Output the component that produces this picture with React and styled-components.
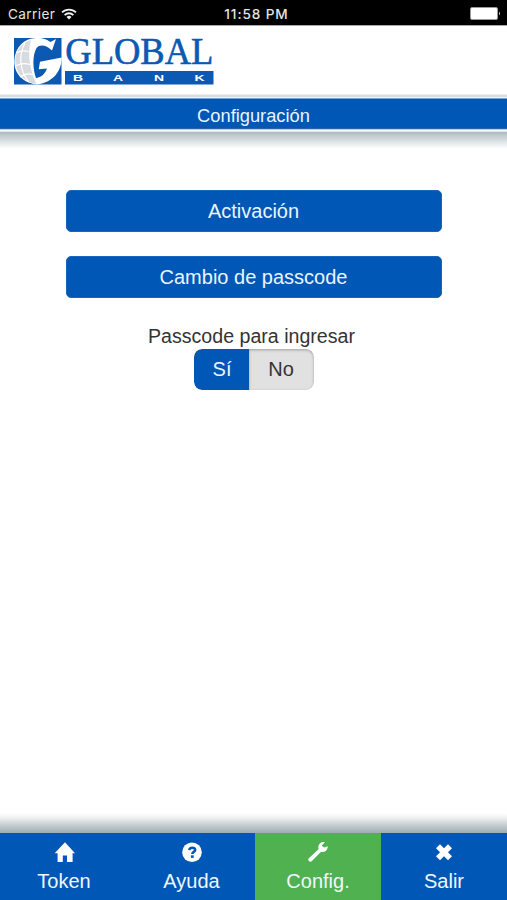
import React from "react";
import styled, { createGlobalStyle, css } from "styled-components";

const BLUE = "#0057b5";
const LOGO_BLUE = "#0b59b3";

const GlobalStyle = createGlobalStyle`
  * { box-sizing: border-box; }
  body { margin: 0; background: #fff; }
  button { font: inherit; border: 0; margin: 0; padding: 0; }
`;

const Screen = styled.div`
  width: 100%;
  height: 100vh;
  display: flex;
  flex-direction: column;
  overflow: hidden;
  background: #fff;
  color: #333;
  font-family: "Liberation Sans", Arial, sans-serif;
`;

const StatusBar = styled.div`
  height: 25px;
  flex: none;
  display: grid;
  grid-template-columns: 1fr auto 1fr;
  align-items: center;
  padding: 2px 6px 0 8px;
  background: #000;
  color: #e4e4e4;
  font: 13.6px/20px Inter, sans-serif;
`;

const Carrier = styled.div`
  display: flex;
  align-items: center;
  gap: 6px;
  letter-spacing: 0.4px;
`;

const Clock = styled.div`
  font-weight: 500;
  font-size: 13.6px;
  letter-spacing: 0.9px;
  transform: translateX(2px);
`;

const BatterySlot = styled.div`
  display: flex;
  justify-content: flex-end;
`;

const Brand = styled.header`
  height: 69px;
  flex: none;
  padding: 12px 0 0 13px;
  border-top: 1px solid #aaa;
`;

const TitleBar = styled.h1`
  height: 40px;
  flex: none;
  margin: 0;
  display: flex;
  align-items: center;
  justify-content: center;
  background: linear-gradient(
    #eee 0 1px,
    #dddddf 1px 3px,
    #eef3f7 3px 4px,
    #6aa5dc 4px 5px,
    ${BLUE} 5px 34px,
    #2a62a6 34px 35px,
    #b4d3ef 35px 36px,
    #f6fafc 36px 37px,
    #dfe5e8 37px 38px,
    #b5bdc2 38px 40px
  );
  color: #e8f4ff;
  font-weight: 400;
  font-size: 18.3px;
  line-height: 24px;
  padding-top: 3px;
`;

const Content = styled.main`
  flex: 1;
  display: flex;
  flex-direction: column;
  align-items: center;
  padding-top: 56px;
  background:
    linear-gradient(#bbc5ca, #d0d7da 5px, #eef1f2 11px, #fff 15px) top / 100% 15px no-repeat,
    linear-gradient(#fff, #eef0f1 5px, #c5ced1 12px, #9dadb4 20px) bottom / 100% 20px no-repeat;
`;

const ActionButton = styled.button`
  width: 376px;
  height: 42px;
  margin-bottom: 24px;
  border: 1px solid #1766bb;
  border-radius: 5px;
  background: ${BLUE};
  color: #eaf5ff;
  font-size: 20px;
  line-height: 24px;
`;

const SettingLabel = styled.div`
  margin: 2px 0 1px -4px;
  font-size: 19.6px;
  line-height: 24px;
`;

const Toggle = styled.div`
  display: flex;
  width: 120px;
  height: 41px;
  border-radius: 8px;
  overflow: hidden;
`;

const ToggleOption = styled.button`
  width: ${(p) => (p.$active ? 55 : 65)}px;
  background: #e1e1e1;
  color: #333;
  font-size: 20px;
  box-shadow: inset 0 1px 3px rgba(0, 0, 0, 0.3);
  border-radius: 0 8px 8px 0;
  ${(p) =>
    p.$active &&
    css`
      padding-left: 2px;
      background: ${BLUE};
      color: #eaf5ff;
      box-shadow: none;
      border-radius: 8px 0 0 8px;
    `}
`;

const TabBar = styled.nav`
  height: 67px;
  flex: none;
  display: grid;
  grid-template-columns: 128px 127px 126px 126px;
`;

const Tab = styled.button`
  display: flex;
  flex-direction: column;
  align-items: center;
  padding-top: 8px;
  gap: 6px;
  background: ${(p) => (p.$active ? "#50b150" : BLUE)};
  color: #fff;
  font-size: 20px;
  line-height: 24px;
  svg { display: block; }
`;

const TabLabel = styled.span`
  color: #eef7ff;
`;

const Wifi = () => (
  <svg width="16" height="12" viewBox="0 0 16 12" fill="none" stroke="#eee" strokeWidth="1.8">
    <path d="M1 4.4a10 10 0 0 1 14 0M3.6 7.1a6.2 6.2 0 0 1 8.8 0" />
    <path d="M5.5 9a3.6 3.6 0 0 1 5 0L8 11.6z" fill="#eee" stroke="none" />
  </svg>
);

const Battery = () => (
  <svg width="31" height="13" viewBox="0 0 31 13">
    <rect x=".5" y=".5" width="27" height="12" rx="1.5" fill="#fff" stroke="#999" />
    <path d="M29 4.5q2 2 0 4z" fill="#ccc" />
  </svg>
);

const Wordmark = styled.text`
  fill: ${LOGO_BLUE};
  stroke: ${LOGO_BLUE};
  stroke-width: 0.6px;
  font-family: "Liberation Serif", serif;
  font-size: 37.5px;
`;

const Submark = styled.text`
  fill: #fff;
  font-family: "Liberation Sans", sans-serif;
  font-weight: 700;
  font-size: 9px;
  text-anchor: middle;
`;

const LogoFrame = styled.svg`
  display: block;
  overflow: visible;
`;

const Logo = () => (
  <LogoFrame width="202" height="50" viewBox="13 38 202 50" role="img" aria-label="Global Bank">
    <rect x="14" y="38" width="47.5" height="46.5" fill={LOGO_BLUE} />
    <path
      d="M56 39 52 50.5C47 45.5 40 43.5 36.5 48C32.5 55 32.5 68 36 78C41 77.5 45 74 47 68.5L38.7 69.3 40 61.7 61.7 57.5C61.7 70 54 82.5 37 84.5C23 83 14 73.5 14.3 61C15 47 24 38.5 36 38C43 37.5 47 39.5 50.5 42z"
      fill="#fff"
    />
    <path
      d="M31 40C21 43 15.3 51 15.3 61.5C15.5 73 24 82 36.5 84C30 71 27 54 31 40z"
      fill="#d9dadd"
    />
    <path
      d="M17 52.5Q22 50 28.5 51.5M15.5 66Q22 62 30 64.5M20 77Q27 72 33.5 75M25 43C18 55 20 72 29 82"
      fill="none"
      stroke="#fff"
      strokeWidth="1.2"
    />
    <Wordmark x="65.3" y="63.5" textLength="148" lengthAdjust="spacingAndGlyphs">
      GLOBAL
    </Wordmark>
    <rect x="65" y="71" width="148.5" height="13.5" fill={LOGO_BLUE} />
    {[["B", 78], ["A", 118], ["N", 159], ["K", 199.5]].map(([letter, x]) => (
      <Submark key={letter} transform={`translate(${x} 80.8) scale(1.55 1)`}>
        {letter}
      </Submark>
    ))}
  </LogoFrame>
);

const HomeIcon = () => (
  <svg width="22" height="22" viewBox="0 0 22 22" fill="currentColor">
    <path d="M12 1.2 22 12.2H19.6V21H14V14.5H9.8V21H4.6V12.2H1.7z" />
  </svg>
);

const HelpIcon = () => (
  <svg width="22" height="22" viewBox="0 0 22 22">
    <circle cx="11" cy="11.3" r="9.8" fill="currentColor" />
    <path
      d="M8.3 9.2C8.5 7.4 9.7 6.7 11.2 6.7C13 6.7 14.2 7.6 14.2 9C14.2 10.9 11.3 10.9 11.3 13"
      fill="none"
      stroke={BLUE}
      strokeWidth="2.5"
    />
    <path d="M9.9 14.3h2.8v2.6H9.9z" fill={BLUE} />
  </svg>
);

const WrenchIcon = () => (
  <svg width="22" height="22" viewBox="0 0 22 22" fill="currentColor">
    <path d="M17.8 1.2C14.8.5 11.7 2.5 11.3 5.5L11.5 8.2 1.8 17.3C.2 19.3 2.7 21.8 4.6 20.2L13.9 10.9C17 11.7 20.6 9.8 20.9 5.2L17 6.5 14.7 4.7z" />
  </svg>
);

const CloseIcon = () => (
  <svg width="22" height="22" viewBox="0 0 22 22" stroke="currentColor" strokeWidth="5.6">
    <path d="M5 5.2 17 17.2M17 5.2 5 17.2" />
  </svg>
);

const tabs = [
  { label: "Token", Icon: HomeIcon },
  { label: "Ayuda", Icon: HelpIcon },
  { label: "Config.", Icon: WrenchIcon, active: true },
  { label: "Salir", Icon: CloseIcon },
];

export default function App() {
  return (
    <>
      <GlobalStyle />
      <Screen>
        <StatusBar>
          <Carrier>
            Carrier
            <Wifi />
          </Carrier>
          <Clock>11:58 PM</Clock>
          <BatterySlot>
            <Battery />
          </BatterySlot>
        </StatusBar>
        <Brand>
          <Logo />
        </Brand>
        <TitleBar>Configuración</TitleBar>
        <Content>
          <ActionButton>Activación</ActionButton>
          <ActionButton>Cambio de passcode</ActionButton>
          <SettingLabel>Passcode para ingresar</SettingLabel>
          <Toggle>
            <ToggleOption $active>Sí</ToggleOption>
            <ToggleOption>No</ToggleOption>
          </Toggle>
        </Content>
        <TabBar>
          {tabs.map(({ label, Icon, active }) => (
            <Tab key={label} $active={active}>
              <Icon />
              <TabLabel>{label}</TabLabel>
            </Tab>
          ))}
        </TabBar>
      </Screen>
    </>
  );
}
